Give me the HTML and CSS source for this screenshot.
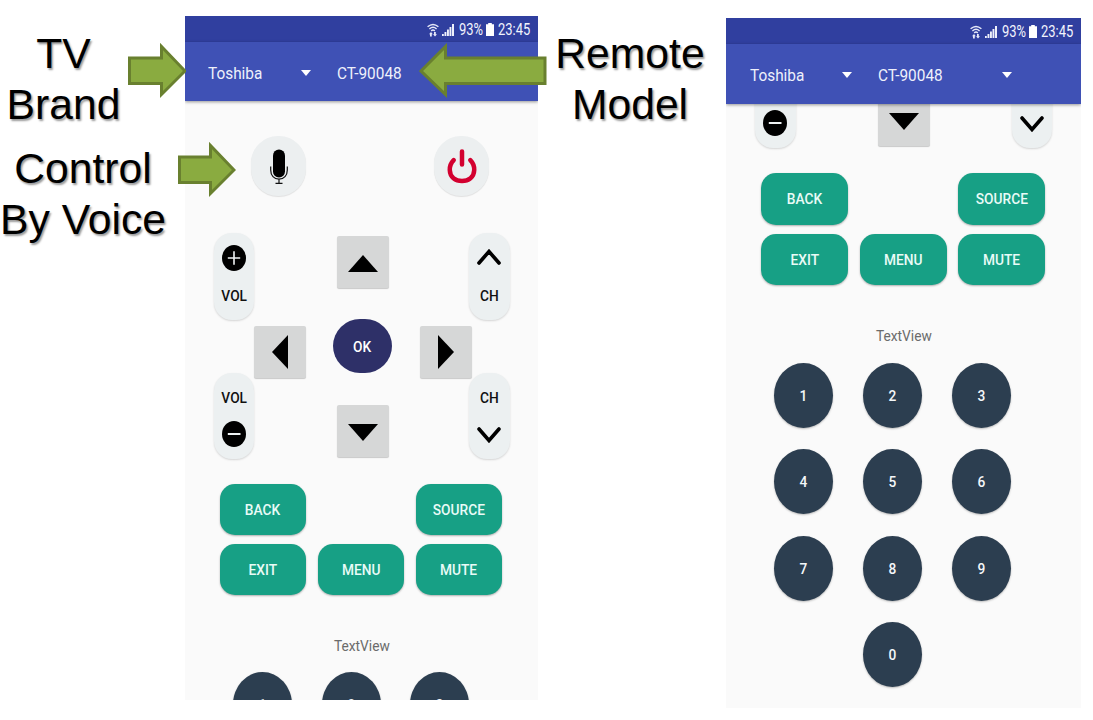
FILE: index.html
```html
<!DOCTYPE html>
<html lang="en">
<head>
<meta charset="utf-8">
<title>Remote control app</title>
<link rel="stylesheet" href="styles.css">
</head>
<body>
<svg class="defs" width="0" height="0">
  <symbol id="wifi" viewBox="0 0 12 14"><g fill="none" stroke="#e6e9f8" stroke-width="1.400"><path d="M.6 3.800Q6-1 11.400 3.800M2.400 6Q6 2.600 9.600 6M4.200 8Q6 6.200 7.800 8"/></g><path fill="#e6e9f8" d="M3 13.500V11.300H2L4 8.900 5.800 11.300H4.800V13.500zM7 9V11.200H6L8 13.600 10 11.200H8.800V9z"/></symbol>
  <symbol id="signal" viewBox="0 0 12 12"><path fill="#eef0fb" d="M0 10h1.800v2H0zM2.500 8h1.900v4H2.500zM5 5.400h1.900V12H5zM7.500 3h1.900v9H7.500zM10 0h2v12H10z"/></symbol>
  <symbol id="battery" viewBox="0 0 8 13"><path fill="#fff" d="M2.200 0h3.600v1.300H8V13H0V1.300h2.200z"/></symbol>
  <symbol id="caret" viewBox="0 0 10 6"><path fill="#fff" d="M0 0h10L5 6z"/></symbol>
  <symbol id="tri" viewBox="0 0 30 17"><path d="M15 0 30 17H0z"/></symbol>
  <symbol id="tri-side" viewBox="0 0 16 34"><path d="M16 0V34L0 17z"/></symbol>
  <symbol id="plus" viewBox="0 0 24 26"><ellipse cx="12" cy="13" rx="12" ry="13"/><path stroke="#eef2f3" stroke-width="1.600" d="M5.800 13H18.200M12 6.300V19.700"/></symbol>
  <symbol id="minus" viewBox="0 0 24 26"><ellipse cx="12" cy="13" rx="12" ry="13"/><path stroke="#eef2f3" stroke-width="2" d="M5.800 13H18.500"/></symbol>
  <symbol id="chev" viewBox="0 0 24 16"><path fill="none" stroke="#000" stroke-width="3.600" stroke-linecap="round" d="M2 14 12 2.500 22 14"/></symbol>
</svg>

<main class="slide">
  <section class="notes notes-left">
    <p class="note note-brand">TV<br>Brand</p>
    <p class="note note-voice">Control<br>By Voice</p>
  </section>

  <section class="phone phone-a">
    <div class="status">
      <svg class="i-wifi"><use href="#wifi"/></svg><svg class="i-signal"><use href="#signal"/></svg>
      <span class="pct"><span class="slim">93%</span></span><svg class="i-batt"><use href="#battery"/></svg><span class="clock"><span class="slim">23:45</span></span>
    </div>
    <header class="appbar">
      <span class="brand"><span class="narrow">Toshiba</span></span><svg class="caret"><use href="#caret"/></svg>
      <span class="model"><span class="narrow">CT-90048</span></span>
    </header>
    <div class="screen">
      <div class="top-row">
        <button class="round"><svg width="18" height="36" viewBox="0 0 18 36"><rect x="3" y="0.500" width="12" height="28" rx="6"/><path fill="none" stroke="#111" stroke-width="1.200" d="M.7 17.500V21C.7 26.500 4 30.200 9 30.200S17.300 26.500 17.300 21V17.500M9 30.200V34M5.500 34.300H12.500"/></svg></button>
        <button class="round"><svg width="30" height="36" viewBox="0 0 30 36"><path fill="none" stroke="#d3002f" stroke-width="4.500" stroke-linecap="round" d="M15 2.500V15.500M6.700 11.200C1 17 2 25.500 6.500 29.300 11 33 19 33 23.500 29.300 28 25.500 29 17 23.300 11.200"/></svg></button>
      </div>
      <div class="dpad">
        <div class="pills">
          <div class="pill"><svg class="i-disc"><use href="#plus"/></svg><span class="narrow">VOL</span></div>
          <div class="pill pill-low"><span class="narrow">VOL</span><svg class="i-disc"><use href="#minus"/></svg></div>
        </div>
        <button class="key key-side"><svg class="tri-side"><use href="#tri-side"/></svg></button>
        <div class="mid">
          <button class="key"><svg class="tri"><use href="#tri"/></svg></button>
          <button class="ok"><span class="narrow">OK</span></button>
          <button class="key"><svg class="tri flip"><use href="#tri"/></svg></button>
        </div>
        <button class="key key-side"><svg class="tri-side turn"><use href="#tri-side"/></svg></button>
        <div class="pills pills-ch">
          <div class="pill"><svg class="i-chev"><use href="#chev"/></svg><span class="narrow">CH</span></div>
          <div class="pill pill-low"><span class="narrow">CH</span><svg class="i-chev flip"><use href="#chev"/></svg></div>
        </div>
      </div>
      <div class="actions">
        <button class="act"><span class="narrow">BACK</span></button>
        <button class="act last"><span class="narrow">SOURCE</span></button>
        <button class="act"><span class="narrow">EXIT</span></button>
        <button class="act"><span class="narrow">MENU</span></button>
        <button class="act"><span class="narrow">MUTE</span></button>
      </div>
      <p class="textview"><span class="narrow">TextView</span></p>
      <div class="numbers">
        <button class="num"><span class="narrow">1</span></button>
        <button class="num"><span class="narrow">2</span></button>
        <button class="num"><span class="narrow">3</span></button>
      </div>
    </div>
  </section>

  <section class="notes notes-mid">
    <p class="note note-model">Remote<br>Model</p>
  </section>

  <section class="phone phone-b">
    <div class="status">
      <svg class="i-wifi"><use href="#wifi"/></svg><svg class="i-signal"><use href="#signal"/></svg>
      <span class="pct"><span class="slim">93%</span></span><svg class="i-batt"><use href="#battery"/></svg><span class="clock"><span class="slim">23:45</span></span>
    </div>
    <header class="appbar">
      <span class="brand"><span class="narrow">Toshiba</span></span><svg class="caret"><use href="#caret"/></svg>
      <span class="model"><span class="narrow">CT-90048</span></span><svg class="caret"><use href="#caret"/></svg>
    </header>
    <div class="screen">
      <div class="cut-row">
        <div class="pill pill-low"><svg class="i-disc"><use href="#minus"/></svg></div>
        <button class="key"><svg class="tri flip"><use href="#tri"/></svg></button>
        <div class="pill pill-low"><svg class="i-chev flip"><use href="#chev"/></svg></div>
      </div>
      <div class="actions">
        <button class="act"><span class="narrow">BACK</span></button>
        <button class="act last"><span class="narrow">SOURCE</span></button>
        <button class="act"><span class="narrow">EXIT</span></button>
        <button class="act"><span class="narrow">MENU</span></button>
        <button class="act"><span class="narrow">MUTE</span></button>
      </div>
      <p class="textview"><span class="narrow">TextView</span></p>
      <div class="numbers">
        <button class="num"><span class="narrow">1</span></button>
        <button class="num"><span class="narrow">2</span></button>
        <button class="num"><span class="narrow">3</span></button>
        <button class="num"><span class="narrow">4</span></button>
        <button class="num"><span class="narrow">5</span></button>
        <button class="num"><span class="narrow">6</span></button>
        <button class="num"><span class="narrow">7</span></button>
        <button class="num"><span class="narrow">8</span></button>
        <button class="num"><span class="narrow">9</span></button>
        <button class="num zero"><span class="narrow">0</span></button>
      </div>
    </div>
  </section>

  <svg class="arrow arrow-brand" viewBox="0 0 58 56"><path d="M1.500 15H33.500V3.500L57 28 33.500 51.500V40.500H1.500z"/></svg>
  <svg class="arrow arrow-voice" viewBox="0 0 58 56"><path d="M1.500 15H32.500V3.500L56 28 32.500 51.500V40.500H1.500z"/></svg>
  <svg class="arrow arrow-model" viewBox="0 0 128 56"><path d="M126 15H26.500V3.500L2 28 26.500 51.500V40.500H126z"/></svg>
</main>
</body>
</html>
```
FILE: styles.css
```css
* { box-sizing: border-box; }
body { margin: 0; background: #fff; overflow: hidden; font-family: Roboto, "Liberation Sans", sans-serif; }
p { margin: 0; }
svg { display: block; flex: none; }
.defs { position: absolute; }
button { border: 0; padding: 1px 0 0; display: flex; align-items: center; justify-content: center; font: 500 15.2px/18px Roboto, sans-serif; flex: none; }

.slide { position: relative; display: flex; align-items: flex-start; width: 1093px; height: 720px; }
.notes { flex: none; text-align: center; }
.notes-left { width: 185px; padding-top: 28px; }
.notes-mid { width: 188px; padding-top: 28px; }
.note { font: 42.67px/51px "Liberation Sans", Arial, sans-serif; color: #000; text-shadow: 1.500px 1.500px 2px rgba(0,0,0,.4); white-space: nowrap; }
.note-brand { width: 127px; }
.note-voice { width: 166px; margin-top: 13px; }
.note-model { width: 184px; }

.narrow { display: inline-block; transform: scaleX(.905); white-space: nowrap; }
.slim { display: inline-block; transform: scaleX(.81); transform-origin: 0 50%; }

.phone { flex: none; display: flex; flex-direction: column; overflow: hidden; background: #fafafa; }
.phone-a { width: 353px; height: 684px; margin-top: 16px; }
.phone-b { width: 355px; height: 690px; margin-top: 18px; }
.status { height: 26px; flex: none; background: #303f9f; display: flex; align-items: center; justify-content: flex-end; color: #f2f4fd; font-size: 16px; line-height: 20px; padding: 1px 7px 0 0; }
.i-wifi { width: 12px; height: 14px; margin-right: 3px; }
.i-signal { width: 12px; height: 12px; margin-right: 5px; }
.pct { width: 27px; }
.i-batt { width: 8px; height: 13px; margin-right: 4px; }
.clock { width: 33px; }
.appbar { position: relative; z-index: 1; height: 59px; flex: none; background: #3f51b5; box-shadow: 0 1px 3px rgba(0,0,0,.4); display: flex; align-items: center; padding: 2px 0 0 23px; color: #eef0fb; font-size: 17.300px; line-height: 22px; }
.phone-b .appbar { height: 60px; padding-left: 24px; }
.appbar .narrow { transform: scaleX(.89); transform-origin: 0 50%; }
.brand { width: 93px; }
.caret { width: 10px; height: 6px; }
.model { width: 124px; margin-left: 26px; }
.phone-b .brand { width: 92px; }

.top-row { display: flex; gap: 128px; padding: 35px 0 0 66px; }
.round { width: 55px; height: 60px; border-radius: 27px; background: #eceff0; box-shadow: 0 1px 1px rgba(0,0,0,.1); }
.dpad { display: flex; padding: 37px 0 0 28.500px; height: 264px; }
.pills { display: flex; flex-direction: column; gap: 53px; }
.pills-ch { margin-left: -3px; }
.pill { width: 40.500px; height: 86.500px; border-radius: 18px; background: #ecf0f1; box-shadow: 0 1px 2px rgba(0,0,0,.15); display: flex; flex-direction: column; align-items: center; justify-content: space-between; padding: 12px 0 15px; font: 500 15.200px/18px Roboto, sans-serif; color: #111; }
.pill-low { padding: 16px 0 12px; }
.i-disc { width: 24px; height: 26px; }
.i-chev { width: 24px; height: 16px; margin: 4px 0; }
.key { width: 52px; height: 52px; background: #d6d7d7; border-radius: 2px; box-shadow: 0 1px 1px rgba(0,0,0,.2); }
.key-side { margin-top: 92.500px; }
.tri { width: 30px; height: 17px; margin-top: 1px; }
.tri-side { width: 16px; height: 34px; }
.flip { transform: scaleY(-1); }
.turn { transform: scaleX(-1); }
.mid { display: flex; flex-direction: column; align-items: center; width: 59px; margin: 3px 28px 0 27px; }
.ok { width: 59px; height: 54px; margin: 31px 0 32px; border-radius: 27px; background: #2e3068; color: #fff; }

.actions { display: grid; grid-template-columns: repeat(3, 86px); gap: 9px 12px; padding: 24px 0 0 35px; }
.act { height: 51px; border-radius: 15px; background: #17a085; color: #e9fbf7; box-shadow: 0 1px 2px rgba(0,0,0,.3); }
.last { grid-column: 3; }
.textview { text-align: center; font-size: 15.200px; line-height: 18px; color: #6b6b6b; margin-top: 42px; }
.numbers { display: grid; grid-template-columns: repeat(3, 59px); gap: 21px 29.500px; padding: 17px 0 0 48px; }
.num { height: 65px; border-radius: 50%; background: #2c3e50; color: #f4f7f9; box-shadow: 0 1px 2px rgba(0,0,0,.25); }
.zero { grid-column: 2; }

.cut-row { display: flex; justify-content: space-between; align-items: flex-end; height: 44px; padding: 0 29px; }
.cut-row .pill { justify-content: flex-end; }
.cut-row .key { margin: 0 0 2px 1px; }
.phone-b .actions { grid-template-columns: repeat(3, 87px); gap: 9px 11.500px; padding-top: 25px; }
.phone-b .act { height: 51.500px; }
.phone-b .numbers { padding-top: 18px; gap: 21.300px 30px; }

.arrow { position: absolute; z-index: 2; fill: #8aab40; stroke: #69802f; stroke-width: 3; height: 56px; }
.arrow-brand { left: 128px; top: 43px; width: 58px; }
.arrow-voice { left: 178px; top: 142px; width: 58px; }
.arrow-model { left: 419px; top: 43px; width: 128px; }
```
